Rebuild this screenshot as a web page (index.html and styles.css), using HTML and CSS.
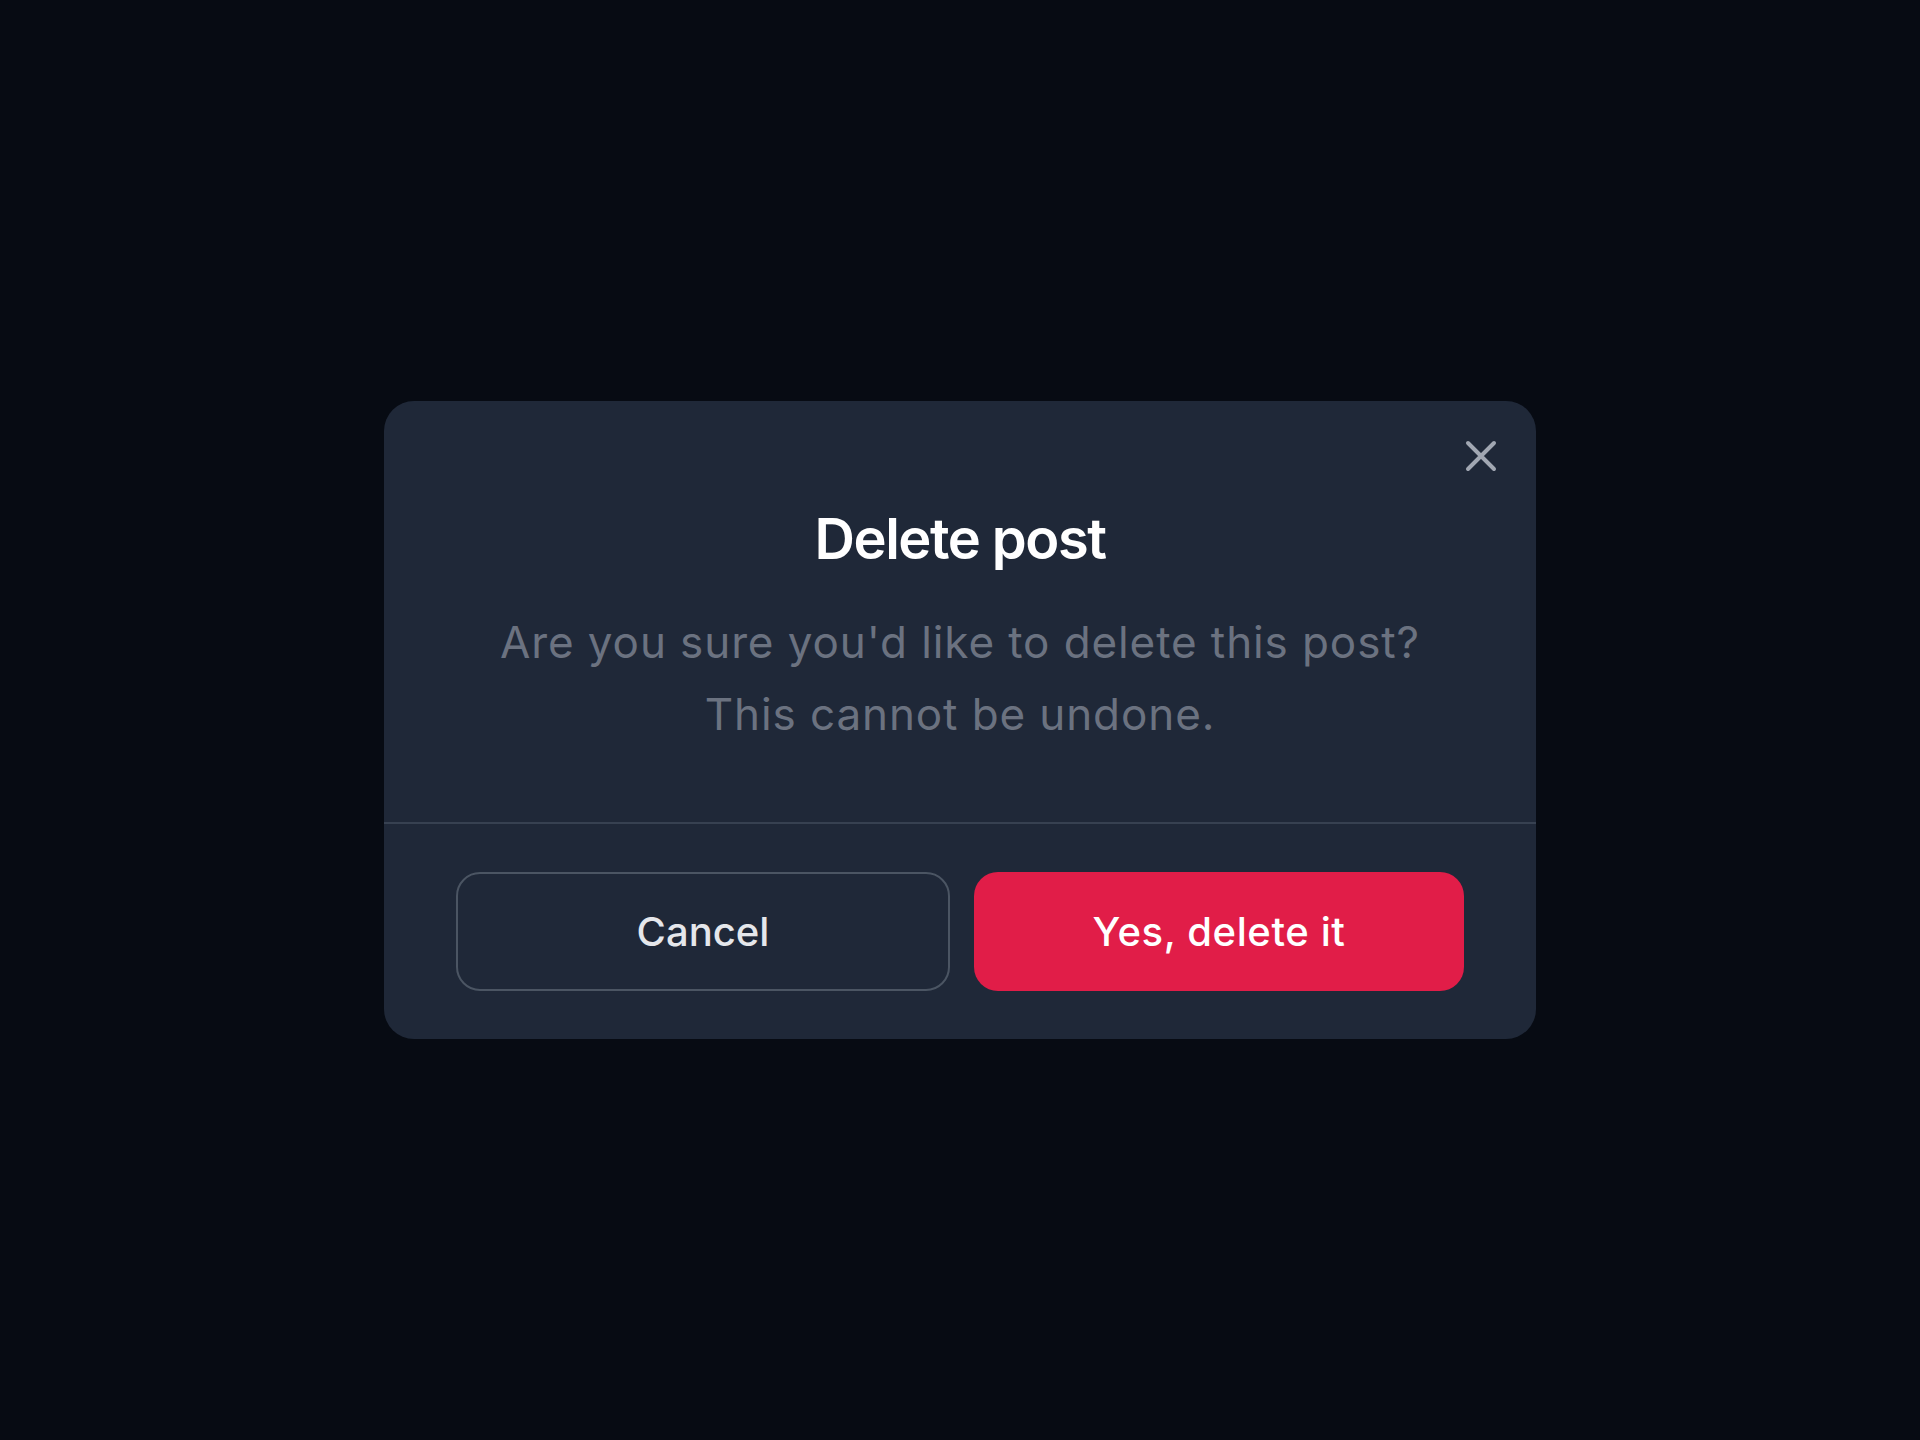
FILE: index.html
```html
<!DOCTYPE html>
<html lang="en">
<head>
<meta charset="utf-8">
<title>Delete post</title>
<link rel="stylesheet" href="styles.css">
</head>
<body>
<main class="backdrop">
  <section class="modal" role="dialog" aria-labelledby="modal-title">
    <button class="close" aria-label="Close">
      <svg viewBox="0 0 32 32" width="32" height="32" fill="none" stroke="currentColor" stroke-width="4" stroke-linecap="round">
        <path d="M3 3 L29 29 M29 3 L3 29"/>
      </svg>
    </button>
    <div class="modal-body">
      <h1 id="modal-title" class="title">Delete post</h1>
      <p class="message">Are you sure you'd like to delete this post?<br>This cannot be undone.</p>
    </div>
    <div class="modal-footer">
      <button class="btn btn-cancel">Cancel</button>
      <button class="btn btn-danger">Yes, delete it</button>
    </div>
  </section>
</main>
</body>
</html>
```

FILE: styles.css
```css
* { box-sizing: border-box; }
html, body {
  margin: 0;
  padding: 0;
  background: #070b13;
  font-family: Inter, "Noto Sans", "Liberation Sans", sans-serif;
}
.backdrop {
  width: 1920px;
  height: 1440px;
  display: flex;
  align-items: flex-start;
  justify-content: center;
  padding-top: 401px;
}
.modal {
  position: relative;
  width: 1152px;
  background: #1f2838;
  border-radius: 30px;
  display: flex;
  flex-direction: column;
}
.close {
  position: absolute;
  top: 39px;
  right: 39px;
  width: 32px;
  height: 32px;
  padding: 0;
  border: 0;
  background: transparent;
  color: #a1a7b2;
  display: flex;
  cursor: pointer;
}
.modal-body {
  padding: 105px 72px 72px;
  text-align: center;
}
.title {
  margin: 0;
  font-size: 56px;
  line-height: 67px;
  font-weight: 600;
  letter-spacing: -1.5px;
  color: #ffffff;
}
.message {
  margin: 33px 0 0;
  font-size: 44px;
  line-height: 72px;
  font-weight: 400;
  letter-spacing: 0.9px;
  color: #6b7280;
}
.modal-footer {
  border-top: 2px solid #374151;
  padding: 48px 72px;
  display: flex;
  gap: 24px;
}
.btn {
  flex: 1 1 0;
  height: 119px;
  border-radius: 24px;
  font-family: inherit;
  font-size: 40px;
  font-weight: 500;
  cursor: pointer;
}
.btn-cancel {
  background: transparent;
  border: 2px solid #4b5563;
  color: #e5e7eb;
}
.btn-danger {
  background: #e11d48;
  border: 0;
  color: #ffffff;
  letter-spacing: 0.6px;
}
```
